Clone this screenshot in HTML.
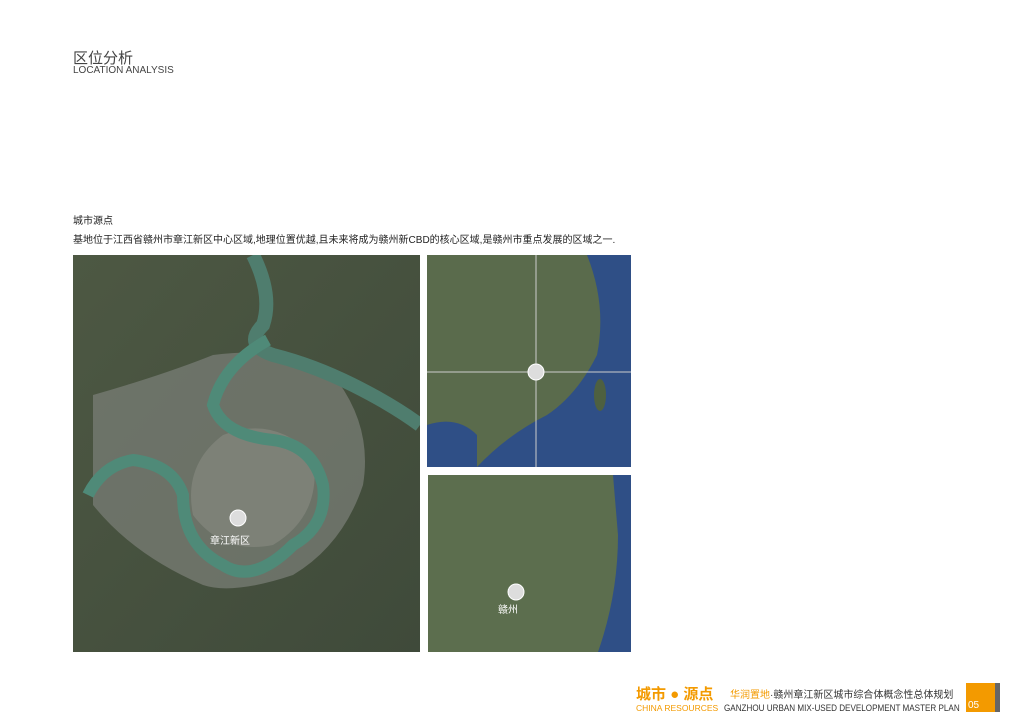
<html><head><style>
body{margin:0;width:1024px;height:724px;background:#fff;position:relative;overflow:hidden;font-family:"Liberation Sans","Noto Sans CJK SC",sans-serif}
.a{position:absolute;white-space:nowrap;line-height:1}
</style></head><body>
<div class="a" style="left:73px;top:51px;font-size:15px;color:#444">区位分析</div>
<div class="a" style="left:73px;top:66px;font-size:10px;color:#444">LOCATION ANALYSIS</div>
<div class="a" style="left:73px;top:217px;font-size:10px;color:#222">城市源点</div>
<div class="a" style="left:73px;top:236px;font-size:10px;color:#222">基地位于江西省赣州市章江新区中心区域,地理位置优越,且未来将成为赣州新CBD的核心区域,是赣州市重点发展的区域之一.</div>

<svg class="a" style="left:73px;top:255px" width="347" height="397">
<defs><linearGradient id="g1" x1="0" y1="0" x2="1" y2="1"><stop offset="0" stop-color="#4d5843"/><stop offset="1" stop-color="#3f4a3a"/></linearGradient></defs>
<rect width="347" height="397" fill="url(#g1)"/>
<path d="M20 140 Q90 120 140 100 Q220 90 260 120 Q300 170 290 230 Q270 290 220 320 Q160 340 130 330 Q60 300 20 250Z" fill="#757a72" opacity=".8"/>
<path d="M150 180 Q200 160 240 200 Q250 260 200 290 Q150 300 120 260 Q110 210 150 180Z" fill="#85877f" opacity=".7"/>
<path d="M180 0 Q200 40 190 70 Q170 90 200 100 Q240 110 280 130 Q320 150 347 170" stroke="#4f7d6e" stroke-width="14" fill="none"/>
<path d="M195 85 Q150 110 140 150 Q150 180 200 185 Q240 190 250 230 Q255 270 220 290 Q180 330 150 310 Q110 290 110 240 Q100 210 60 205 Q30 210 15 240" stroke="#4f8a78" stroke-width="12" fill="none"/>
<circle cx="165" cy="263" r="8" fill="#ddd" stroke="#fff" stroke-width="1"/>
<text x="137" y="289" font-size="10" fill="#fff">章江新区</text>
</svg>

<svg class="a" style="left:427px;top:255px" width="204" height="212">
<rect width="204" height="212" fill="#5a6b4c"/>
<path d="M150 0 L204 0 L204 212 L50 212 Q80 180 120 160 Q150 140 170 100 Q180 50 160 0Z" fill="#2f4f86"/>
<path d="M0 170 Q30 160 50 180 L50 212 L0 212Z" fill="#2f4f86"/>
<ellipse cx="173" cy="140" rx="6" ry="16" fill="#4e6040"/>
<line x1="109" y1="0" x2="109" y2="212" stroke="#ccc" stroke-width="1"/>
<line x1="0" y1="117" x2="204" y2="117" stroke="#ccc" stroke-width="1"/>
<circle cx="109" cy="117" r="8" fill="#ddd" stroke="#fff"/>
</svg>

<svg class="a" style="left:428px;top:475px" width="203" height="177">
<rect width="203" height="177" fill="#5c6e4e"/>
<path d="M185 0 L203 0 L203 177 L170 177 Q190 120 190 60Z" fill="#2f4f86"/>
<circle cx="88" cy="117" r="8" fill="#ddd" stroke="#fff"/>
<text x="70" y="138" font-size="10" fill="#fff">赣州</text>
</svg>

<div class="a" style="left:636px;top:687px;font-size:15px;color:#f39a00;font-weight:bold">城市 ● 源点</div>
<div class="a" style="left:636px;top:704px;font-size:8.5px;color:#f39a00">CHINA RESOURCES</div>
<div class="a" style="left:730px;top:691px;font-size:10px;color:#333"><span style="color:#f39a00">华润置地</span>·赣州章江新区城市综合体概念性总体规划</div>
<div class="a" style="left:724px;top:704px;font-size:9px;color:#333;transform:scaleX(.9);transform-origin:left">GANZHOU URBAN MIX-USED DEVELOPMENT MASTER PLAN</div>
<div class="a" style="left:966px;top:683px;width:29px;height:29px;background:#f39a00"></div>
<div class="a" style="left:995px;top:683px;width:5px;height:29px;background:#666"></div>
<div class="a" style="left:968px;top:701px;font-size:10px;color:#fff">05</div>
</body></html>
